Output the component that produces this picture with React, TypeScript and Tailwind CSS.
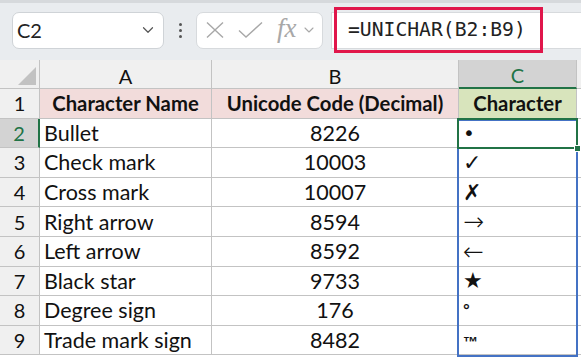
import { ChevronDown } from "lucide-react";

const rows = [
  { name: "Bullet", code: "8226", ch: "•" },
  { name: "Check mark", code: "10003", ch: "✓" },
  { name: "Cross mark", code: "10007", ch: "✗" },
  { name: "Right arrow", code: "8594", ch: "→" },
  { name: "Left arrow", code: "8592", ch: "←" },
  { name: "Black star", code: "9733", ch: "★" },
  { name: "Degree sign", code: "176", ch: "°" },
  { name: "Trade mark sign", code: "8482", ch: "™" },
];

const cell = "border-r border-b border-[#c3c3c3] h-[29.6px] flex items-center";
const rowHead = "border-r border-b border-[#c3c3c3] bg-[#f0f0f0] flex items-center justify-center h-[29.6px]";

const charStyle = (ch: string) => {
  if (ch === "°") return "font-['Liberation_Sans',sans-serif] text-[17px] items-start pt-[2px] font-bold";
  if (ch === "™") return "font-['Liberation_Sans',sans-serif] text-[15px] items-start pt-[5px] font-bold";
  if (ch === "→" || ch === "←") return "font-['DejaVu_Sans',sans-serif] text-[25px] font-light";
  if (ch === "•") return "font-['DejaVu_Sans',sans-serif] text-[20px]";
  return "font-['DejaVu_Sans',sans-serif] text-[22px] font-light";
};

const App = () => {
  return (
    <div className="w-[581px] h-[358px] overflow-hidden bg-white text-[#111] font-['Lato',sans-serif]">
      {/* formula bar */}
      <div className="h-[60px] bg-[#e9ecef] border-t-[3px] border-[#d6d9dc] flex items-center pb-[3px]">
        <div className="ml-[12px] w-[152px] h-[37px] rounded-[7px] border border-[#cfd3d7] bg-white flex items-center justify-between pl-[4px] pr-[6px]">
          <span className="text-[20px] text-[#222]">C2</span>
          <ChevronDown size={18} strokeWidth={1.6} className="text-[#555]" />
        </div>
        <div className="w-[32px] flex flex-col items-center gap-[3px]">
          <span className="w-[3px] h-[3px] rounded-full bg-[#555]" />
          <span className="w-[3px] h-[3px] rounded-full bg-[#555]" />
          <span className="w-[3px] h-[3px] rounded-full bg-[#555]" />
        </div>
        <div className="w-[127px] h-[37px] rounded-[7px] border border-[#d7dadd] bg-white flex items-center pl-[9px] text-[#a8a8a8]">
          <svg width="18" height="16" viewBox="0 0 18 16" fill="none" stroke="currentColor" strokeWidth="1.4">
            <path d="M1 0.5 17 15.5M17 0.5 1 15.5" />
          </svg>
          <svg width="25" height="16" viewBox="0 0 25 16" fill="none" stroke="currentColor" strokeWidth="1.4" className="ml-[14px]">
            <path d="M1 8.5 8 15 24 0.5" />
          </svg>
          <span className="ml-[14px] font-['Liberation_Serif',serif] italic text-[27px] leading-none -mt-[3px]">fx</span>
          <ChevronDown size={16} strokeWidth={1.6} className="ml-[4px]" />
        </div>
        <div className="ml-[8px] flex-1 h-[37px] border-y border-l border-[#d7dadd] bg-white flex items-center">
          <div className="ml-[2px] w-[209px] h-[46px] shrink-0 border-[3px] border-[#e0164b] flex items-center pl-[11px] font-['DejaVu_Sans_Mono',monospace] text-[19.7px] text-[#222]">
            =UNICHAR(B2:B9)
          </div>
        </div>
      </div>

      {/* sheet */}
      <div className="relative grid grid-cols-[40px_172px_247px_118px_1fr] text-[21.5px]">
        {/* column headings */}
        <div className="h-[29px] bg-[#f0f0f0] border-r border-b border-[#c3c3c3] flex items-end justify-end p-[3px]">
          <div className="w-0 h-0 border-l-[18px] border-l-transparent border-b-[18px] border-b-[#c2c2c2]" />
        </div>
        <div className="h-[29px] bg-[#f0f0f0] border-r border-b border-[#c3c3c3] flex items-center justify-center pt-[3px] text-[20px]">A</div>
        <div className="h-[29px] bg-[#f0f0f0] border-r border-b border-[#c3c3c3] flex items-center justify-center pt-[3px] text-[20px]">B</div>
        <div className="h-[29px] bg-[#d3d3d3] border-r border-[#c3c3c3] border-b-2 border-b-[#217346] flex items-center justify-center pt-[3px] text-[20px] text-[#217346]">C</div>
        <div className="h-[29px] bg-[#f0f0f0] border-b border-[#c3c3c3]" />

        {/* header row */}
        <div className={`${rowHead} text-[20px]`}>1</div>
        <div className={`${cell} bg-[#f2dcdb] justify-center font-bold text-[20.3px]`}>Character Name</div>
        <div className={`${cell} bg-[#f2dcdb] justify-center font-bold text-[20.3px]`}>Unicode Code (Decimal)</div>
        <div className={`${cell} bg-[#d8e4bc] justify-center font-bold text-[20.3px]`}>Character</div>
        <div className="border-b border-[#c3c3c3]" />

        {rows.map((r, i) => (
          <div key={r.name} className="contents">
            <div
              className={
                i === 0
                  ? "border-b border-[#c3c3c3] border-r-2 border-r-[#217346] bg-[#d3d3d3] text-[#217346] text-[20px] flex items-center justify-center h-[29.6px]"
                  : `${rowHead} text-[20px]`
              }
            >
              {i + 2}
            </div>
            <div className={`${cell} pl-[4px]`}>{r.name}</div>
            <div className={`${cell} justify-center`}>{r.code}</div>
            <div className={`${cell} pl-[4px] ${charStyle(r.ch)}`}>{r.ch}</div>
            <div className="border-b border-[#c3c3c3]" />
          </div>
        ))}

        {/* spill range and active cell */}
        <div className="absolute left-[457px] top-[59px] w-[121px] h-[238px] border-2 border-[#4472c4]" />
        <div className="absolute left-[457px] top-[58px] w-[121px] h-[31px] border-2 border-[#217346]" />
        <div className="absolute left-[574px] top-[85px] w-[7px] h-[7px] bg-[#217346] border border-white" />
      </div>
    </div>
  );
};

export default App;
